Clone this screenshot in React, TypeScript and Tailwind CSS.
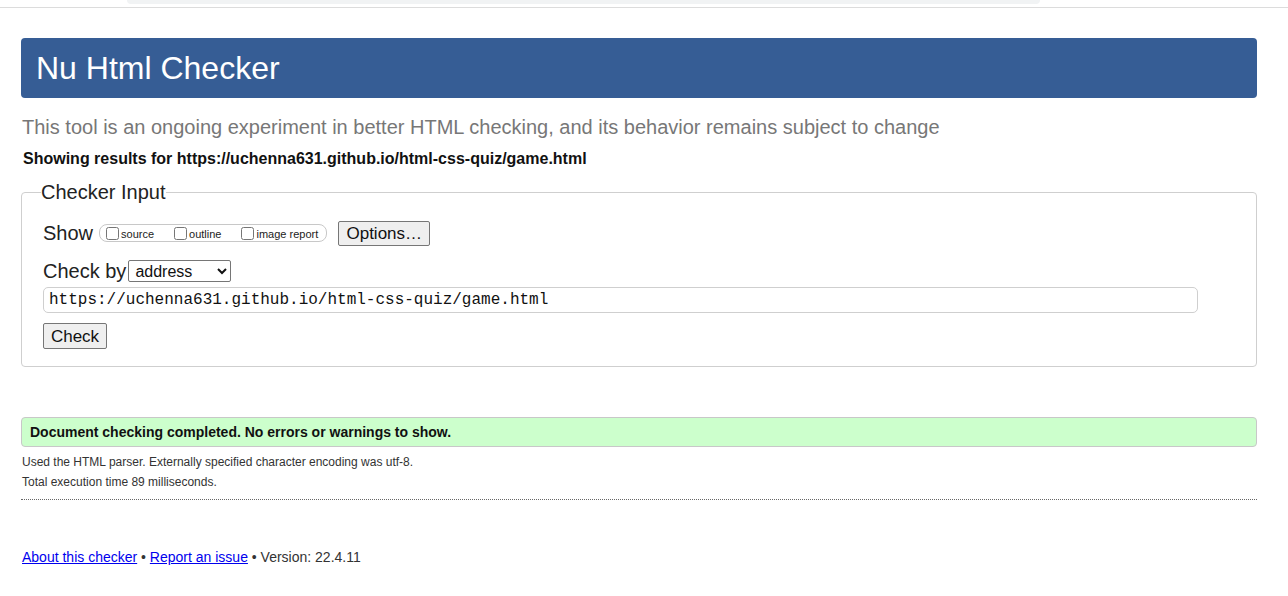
const options = ["source", "outline", "image report"];

const App = () => {
  return (
    <div className="min-h-[596px] bg-white text-[#222] font-['Liberation_Sans',Arial,sans-serif]">
      {/* browser chrome strip */}
      <div className="h-[8px] border-b border-[#dcdcdc] pl-[127px]">
        <div className="w-[913px] h-[4px] bg-[#f1f3f4] rounded-b-[4px]" />
      </div>

      <div className="pl-[21px] pr-[31px]">
        <h1 className="mt-[30px] h-[60px] rounded-[4px] bg-[#365d95] pl-[15px] flex items-center text-[32px] text-white leading-none">
          Nu Html Checker
        </h1>

        <p className="mt-[17px] ml-[1px] text-[20px] leading-[24px] text-[#777]">
          This tool is an ongoing experiment in better HTML checking, and its behavior remains subject to change
        </p>

        <p className="mt-[10px] ml-[2px] text-[16px] leading-[20px] font-bold text-[#111]">
          Showing results for https://uchenna631.github.io/html-css-quiz/game.html
        </p>

        <fieldset className="mt-[11px] border border-[#cfcfcf] rounded-[4px] pl-[19px] pr-[20px] pb-[17px]">
          <legend className="text-[20px] leading-[24px] text-[#222] px-0">Checker Input</legend>
          <div className="pl-[2px]">
            <div className="mt-[15px] flex items-center h-[28px]">
              <span className="text-[20px] leading-[24px] mr-[6px]">Show</span>
              <div className="flex items-center h-[18px] border border-[#c8c8c8] rounded-[8px] pl-[6px] pr-[8px]">
                {options.map((o, i) => (
                  <label key={o} className={`flex items-center text-[11px] text-[#222] ${i < options.length - 1 ? "mr-[20px]" : ""}`}>
                    <input type="checkbox" className="m-0 mr-[2px] w-[13px] h-[13px]" />
                    <span className="mt-[2px]">{o}</span>
                  </label>
                ))}
              </div>
              <button className="ml-[11px] w-[92px] h-[25px] border border-[#767676] rounded-[2px] bg-[#efefef] text-[17px] leading-none text-[#111]">
                Options…
              </button>
            </div>

            <div className="mt-[12px] flex items-center h-[24px]">
              <span className="text-[20px] leading-[24px] mr-[2px]">Check by</span>
              <select className="w-[103px] h-[22px] border border-[#767676] rounded-[2px] bg-white text-[16px] pl-[2px] text-[#111]">
                <option>address</option>
              </select>
            </div>

            <div className="mt-[4px] w-[1155px] h-[26px] border border-[#cfcfcf] rounded-[5px] pl-[5px] flex items-center font-['Liberation_Mono',monospace] text-[16px] text-[#111]">
              https://uchenna631.github.io/html-css-quiz/game.html
            </div>

            <button className="mt-[10px] w-[64px] h-[26px] border border-[#767676] rounded-[2px] bg-[#efefef] text-[17px] leading-none text-[#111]">
              Check
            </button>
          </div>
        </fieldset>

        <div className="mt-[50px] h-[30px] border border-[#c8c8c8] rounded-[4px] bg-[#ccffcc] pl-[8px] flex items-center text-[14px] font-bold text-[#111]">
          Document checking completed. No errors or warnings to show.
        </div>

        <div className="mt-[5px] ml-[1px] text-[12px] leading-[20px] text-[#333]">
          <p>Used the HTML parser. Externally specified character encoding was utf-8.</p>
          <p>Total execution time 89 milliseconds.</p>
        </div>

        <div className="mt-[7px] border-b border-dotted border-[#666]" />

        <p className="mt-[47px] ml-[1px] text-[14px] leading-[20px] text-[#333]">
          <a className="text-[#00e] underline" href="#">About this checker</a>
          {" • "}
          <a className="text-[#00e] underline" href="#">Report an issue</a>
          {" • Version: 22.4.11"}
        </p>
      </div>
    </div>
  );
};

export default App;
